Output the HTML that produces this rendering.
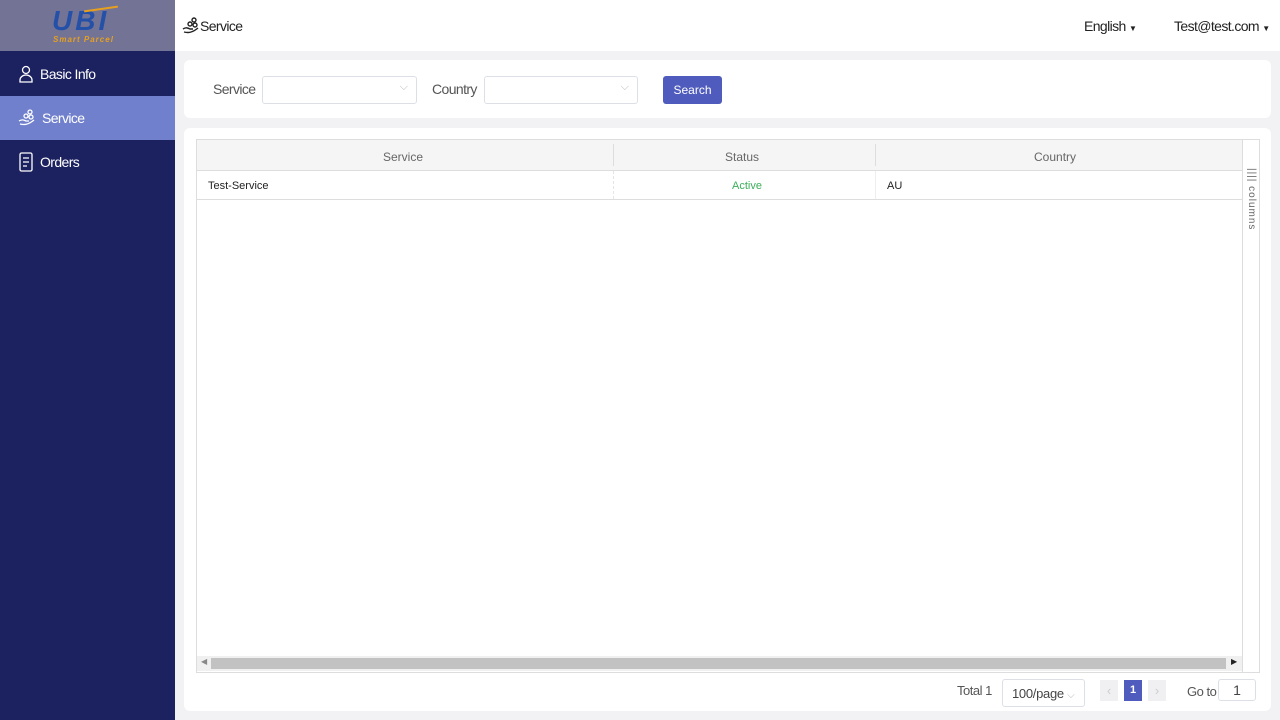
<!DOCTYPE html><html><head><style>
*{box-sizing:border-box;margin:0;padding:0}
body{width:1280px;height:720px;overflow:hidden;background:#f2f2f5;font-family:"Liberation Sans",sans-serif;position:relative;font-size:13px;color:#333}
.side{position:absolute;left:0;top:0;width:175px;height:720px;background:#1c2160}
.logo{height:51px;background:#737396;position:relative}
.nav{height:44px;display:flex;align-items:center;padding-left:18px;color:#fff;font-size:14px;letter-spacing:-.6px}
.nav svg{margin-right:6px}
.act{background:#7080cc}
.top{position:absolute;left:175px;top:0;right:0;height:51px;background:#fff}
.card{position:absolute;background:#fff;border-radius:6px}
.inp{position:absolute;height:28px;border:1px solid #dcdfe6;border-radius:3px;background:#fff}
.inp:after{content:"⌵";position:absolute;right:8px;top:4px;color:#bbb;font-size:11px}
.lbl{position:absolute;font-size:14px;color:#555;letter-spacing:-.6px}
</style></head><body>
<div class="side">
<div class="logo">
<div style="position:absolute;left:52px;top:5px;font:italic bold 28px 'Liberation Sans';color:#2450a8;letter-spacing:3px">UBI</div>
<div style="position:absolute;left:84px;top:8px;width:34px;height:2px;background:#e6a020;transform:rotate(-8deg)"></div>
<div style="position:absolute;left:53px;top:35px;font:italic bold 8px 'Liberation Sans';color:#e6a020;letter-spacing:1px">Smart Parcel</div>
</div>
<div class="nav" style="margin-top:1px"><svg width="16" height="18" viewBox="0 0 16 18" fill="none" stroke="#fff" stroke-width="1.3"><circle cx="8" cy="5" r="3.5"/><path d="M2 17v-2a6 5 0 0 1 12 0v2z"/></svg>Basic Info</div>
<div class="nav act"><svg width="18" height="18" viewBox="0 0 18 18" fill="none" stroke="#fff" stroke-width="1.3"><circle cx="12" cy="3" r="2"/><circle cx="8" cy="7" r="2"/><circle cx="13" cy="8" r="2"/><path d="M1 12c3-2 5-1 7 0h3M2 15c4 1 8 1 14-4"/></svg>Service</div>
<div class="nav"><svg width="16" height="20" viewBox="0 0 16 20" fill="none" stroke="#fff" stroke-width="1.3"><rect x="2" y="1" width="12" height="18" rx="1.5"/><path d="M5 6h6M5 10h6M5 14h4"/></svg>Orders</div>
</div>
<div class="top">
<div style="position:absolute;left:7px;top:17px;font-size:14px;color:#222;letter-spacing:-.6px;display:flex;align-items:center"><svg width="18" height="18" viewBox="0 0 18 18" fill="none" stroke="#222" stroke-width="1.4"><circle cx="12" cy="3" r="2"/><circle cx="8" cy="7" r="2"/><circle cx="13" cy="8" r="2"/><path d="M1 12c3-2 5-1 7 0h3M2 15c4 1 8 1 14-4"/></svg>Service</div>
<div style="position:absolute;left:909px;top:18px;font-size:14px;color:#222;letter-spacing:-.6px">English <span style="font-size:8px">▼</span></div>
<div style="position:absolute;left:999px;top:18px;font-size:14px;color:#222;letter-spacing:-.6px">Test@test.com <span style="font-size:8px">▼</span></div>
</div>
<div class="card" style="left:184px;top:60px;width:1087px;height:58px"></div>
<div class="lbl" style="left:213px;top:81px">Service</div>
<div class="inp" style="left:262px;top:76px;width:155px"></div>
<div class="lbl" style="left:432px;top:81px">Country</div>
<div class="inp" style="left:484px;top:76px;width:154px"></div>
<div style="position:absolute;left:663px;top:76px;width:59px;height:28px;background:#4f5cbd;border-radius:3px;color:#fff;font-size:12px;text-align:center;line-height:28px">Search</div>
<div class="card" style="left:184px;top:128px;width:1087px;height:583px"></div>
<div style="position:absolute;left:196px;top:139px;width:1064px;height:534px;border:1px solid #ddd">
<div style="position:absolute;left:0;top:0;width:1045px;height:31px;background:#f5f5f5;border-bottom:1px solid #ddd;font-size:12px;color:#666">
<span style="position:absolute;left:186px;top:10px">Service</span><span style="position:absolute;left:416px;top:4px;height:22px;border-left:1px solid #ddd"></span>
<span style="position:absolute;left:528px;top:10px">Status</span><span style="position:absolute;left:678px;top:4px;height:22px;border-left:1px solid #ddd"></span>
<span style="position:absolute;left:837px;top:10px">Country</span></div>
<div style="position:absolute;left:0;top:31px;width:1045px;height:29px;border-bottom:1px solid #ddd;font-size:11px;color:#222">
<span style="position:absolute;left:11px;top:9px">Test-Service</span><span style="position:absolute;left:416px;top:0;height:28px;border-left:1px dashed #e5e5e5"></span>
<span style="position:absolute;left:535px;top:9px;color:#3cae5a">Active</span><span style="position:absolute;left:678px;top:0;height:28px;border-left:1px solid #eee"></span>
<span style="position:absolute;left:690px;top:9px">AU</span></div>
<div style="position:absolute;left:1045px;top:0;width:1px;height:532px;background:#ddd"></div>
<div style="position:absolute;left:1049px;top:28px;font-size:10px;color:#666;writing-mode:vertical-rl;letter-spacing:1px">|||| columns</div>
<div style="position:absolute;left:0;top:516px;width:1045px;height:15px;background:#f0f0f0"><div style="position:absolute;left:14px;top:2px;width:1015px;height:11px;background:#c2c2c2"></div><span style="position:absolute;left:4px;top:1px;font-size:8px;color:#888">◀</span><span style="position:absolute;left:1034px;top:1px;font-size:8px;color:#222">▶</span></div>
</div>
<div style="position:absolute;left:957px;top:683px;font-size:13px;color:#555;letter-spacing:-.5px">Total 1</div>
<div style="position:absolute;left:1002px;top:679px;width:83px;height:28px;border:1px solid #dcdfe6;border-radius:3px;font-size:13px;color:#444;padding:6px 9px;letter-spacing:-.3px">100/page <span style="color:#bbb;font-size:10px">⌵</span></div>
<div style="position:absolute;left:1100px;top:680px;width:18px;height:21px;background:#f0f0f2;color:#ccc;text-align:center;line-height:21px">‹</div>
<div style="position:absolute;left:1124px;top:680px;width:18px;height:21px;background:#4f5cbd;color:#fff;text-align:center;line-height:21px;font-size:11px;font-weight:bold">1</div>
<div style="position:absolute;left:1148px;top:680px;width:18px;height:21px;background:#f0f0f2;color:#ccc;text-align:center;line-height:21px">›</div>
<div style="position:absolute;left:1187px;top:684px;font-size:13px;color:#555;letter-spacing:-.5px">Go to</div>
<div style="position:absolute;left:1218px;top:679px;width:38px;height:22px;border:1px solid #dcdfe6;border-radius:3px;font-size:14px;text-align:center;line-height:20px;color:#444">1</div>
</body></html>
